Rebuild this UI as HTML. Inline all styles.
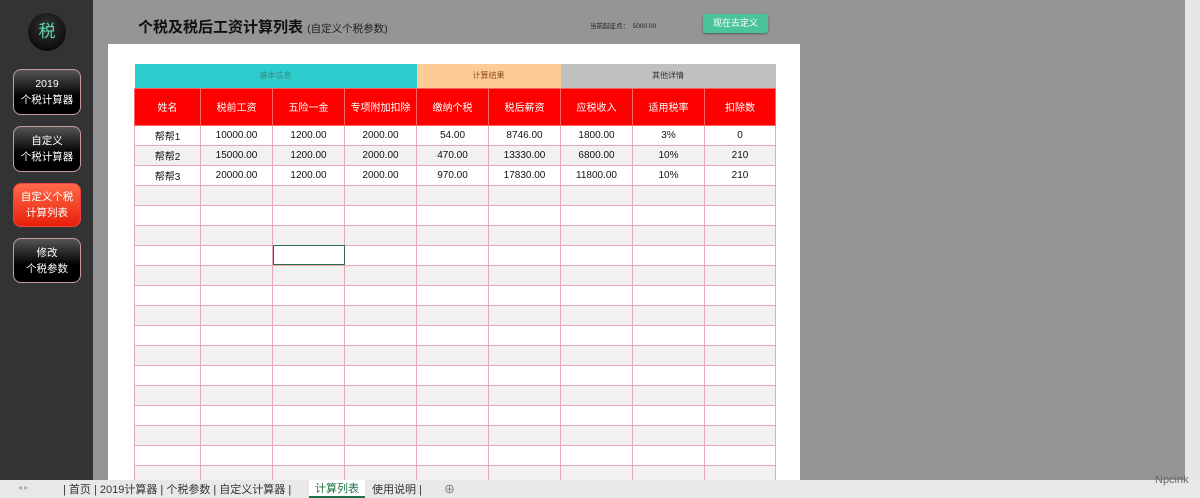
<!DOCTYPE html>
<html><head><meta charset="utf-8"><style>
*{margin:0;padding:0;box-sizing:border-box}
body{width:1200px;height:498px;overflow:hidden;background:#959595;font-family:"Liberation Sans","Noto Sans CJK SC",sans-serif;position:relative}
.side{position:absolute;left:0;top:0;width:93px;height:480px;background:#333}
.circ{position:absolute;left:28px;top:13px;width:38px;height:38px;border-radius:50%;background:radial-gradient(circle at 50% 35%,#333,#000);color:#5fd6a6;font-size:17px;text-align:center;line-height:38px}
.btn{position:absolute;left:13px;width:68px;border-radius:8px;border:1px solid #c99;background:linear-gradient(#555,#000 60%);color:#fff;font-size:10.5px;text-align:center;display:flex;flex-direction:column;justify-content:center;line-height:16px}
.btn.on{background:linear-gradient(#ff6a4a,#e8200a);border-color:#e44}
.page{position:absolute;left:108px;top:44px;width:692px;height:436px;background:#fff}
.title{position:absolute;left:138px;top:16px;font-size:15px;font-weight:bold;color:#111}
.title span{font-size:10.5px;font-weight:normal;color:#222}
.cur{position:absolute;left:590px;top:20px;font-size:6.5px;color:#222}
.go{position:absolute;left:703px;top:14px;width:65px;height:19px;border-radius:3px;background:#4cc49a;color:#fff;font-size:9px;text-align:center;line-height:19px;box-shadow:0 1px 2px #555}
table{position:absolute;left:134px;top:64px;border-collapse:collapse;table-layout:fixed;font-size:10px}
td{text-align:center;border:1px solid #e6a9b4;height:20px;color:#111;padding:0}
tr.g td{background:#f1f1f1}
.h1 td{height:24px;font-size:8px;border:none}
.h2 td{height:37px;background:#f00;color:#fff;border:1px solid #f66;font-size:10px}
.sel{outline:1.5px solid #2d6b4d;outline-offset:-1px}
.scroll{position:absolute;left:1185px;top:0;width:15px;height:480px;background:#e6e6e6}
.tabs{position:absolute;left:0;top:480px;width:1200px;height:18px;background:#e8e8e8;font-size:11px;color:#333}
.tabs span{position:absolute;top:1px}
</style></head><body>
<div class="side"></div>
<div class="circ">税</div>
<div class="btn" style="top:69px;height:46px">2019<br>个税计算器</div>
<div class="btn" style="top:126px;height:46px">自定义<br>个税计算器</div>
<div class="btn on" style="top:183px;height:44px">自定义个税<br>计算列表</div>
<div class="btn" style="top:238px;height:45px">修改<br>个税参数</div>
<div class="title">个税及税后工资计算列表 <span>(自定义个税参数)</span></div>
<div class="cur">当前起征点：&nbsp;&nbsp;5000.00</div>
<div class="go">现在去定义</div>
<div class="page"></div>
<table>
<colgroup><col style="width:66px"><col style="width:72px"><col style="width:72px"><col style="width:72px"><col style="width:72px"><col style="width:72px"><col style="width:72px"><col style="width:72px"><col style="width:71px"></colgroup>
<tr class="h1"><td colspan="4" style="background:#2ecccc;color:#3a8a80">基本信息</td><td colspan="2" style="background:#fccb98;color:#8a4a10">计算结果</td><td colspan="3" style="background:#c0c0c0;color:#333">其他详情</td></tr>
<tr class="h2"><td>姓名</td><td>税前工资</td><td>五险一金</td><td>专项附加扣除</td><td>缴纳个税</td><td>税后薪资</td><td>应税收入</td><td>适用税率</td><td>扣除数</td></tr>
<tr><td>帮帮1</td><td>10000.00</td><td>1200.00</td><td>2000.00</td><td>54.00</td><td>8746.00</td><td>1800.00</td><td>3%</td><td>0</td></tr>
<tr class="g"><td>帮帮2</td><td>15000.00</td><td>1200.00</td><td>2000.00</td><td>470.00</td><td>13330.00</td><td>6800.00</td><td>10%</td><td>210</td></tr>
<tr><td>帮帮3</td><td>20000.00</td><td>1200.00</td><td>2000.00</td><td>970.00</td><td>17830.00</td><td>11800.00</td><td>10%</td><td>210</td></tr>
<tr class="g"><td></td><td></td><td></td><td></td><td></td><td></td><td></td><td></td><td></td></tr>
<tr><td></td><td></td><td></td><td></td><td></td><td></td><td></td><td></td><td></td></tr>
<tr class="g"><td></td><td></td><td></td><td></td><td></td><td></td><td></td><td></td><td></td></tr>
<tr><td></td><td></td><td class="sel"></td><td></td><td></td><td></td><td></td><td></td><td></td></tr>
<tr class="g"><td></td><td></td><td></td><td></td><td></td><td></td><td></td><td></td><td></td></tr>
<tr><td></td><td></td><td></td><td></td><td></td><td></td><td></td><td></td><td></td></tr>
<tr class="g"><td></td><td></td><td></td><td></td><td></td><td></td><td></td><td></td><td></td></tr>
<tr><td></td><td></td><td></td><td></td><td></td><td></td><td></td><td></td><td></td></tr>
<tr class="g"><td></td><td></td><td></td><td></td><td></td><td></td><td></td><td></td><td></td></tr>
<tr><td></td><td></td><td></td><td></td><td></td><td></td><td></td><td></td><td></td></tr>
<tr class="g"><td></td><td></td><td></td><td></td><td></td><td></td><td></td><td></td><td></td></tr>
<tr><td></td><td></td><td></td><td></td><td></td><td></td><td></td><td></td><td></td></tr>
<tr class="g"><td></td><td></td><td></td><td></td><td></td><td></td><td></td><td></td><td></td></tr>
<tr><td></td><td></td><td></td><td></td><td></td><td></td><td></td><td></td><td></td></tr>
<tr class="g"><td></td><td></td><td></td><td></td><td></td><td></td><td></td><td></td><td></td></tr>
</table>
<div class="scroll"></div>
<div class="tabs">
<span style="left:18px;color:#aaa;font-size:8px;top:3px">◂ ▸</span>
<span style="left:63px">| 首页 | 2019计算器 | 个税参数 | 自定义计算器 |</span>
<span style="left:309px;background:#fff;color:#1e7145;border-bottom:2px solid #1e7145;padding:0 6px;top:0;height:18px">计算列表</span>
<span style="left:372px">使用说明 |</span>
<span style="left:444px;color:#666">⊕</span>
<span style="left:1155px;top:-6px;color:#666;font-size:11px">Npcink</span>
</div>
</body></html>
